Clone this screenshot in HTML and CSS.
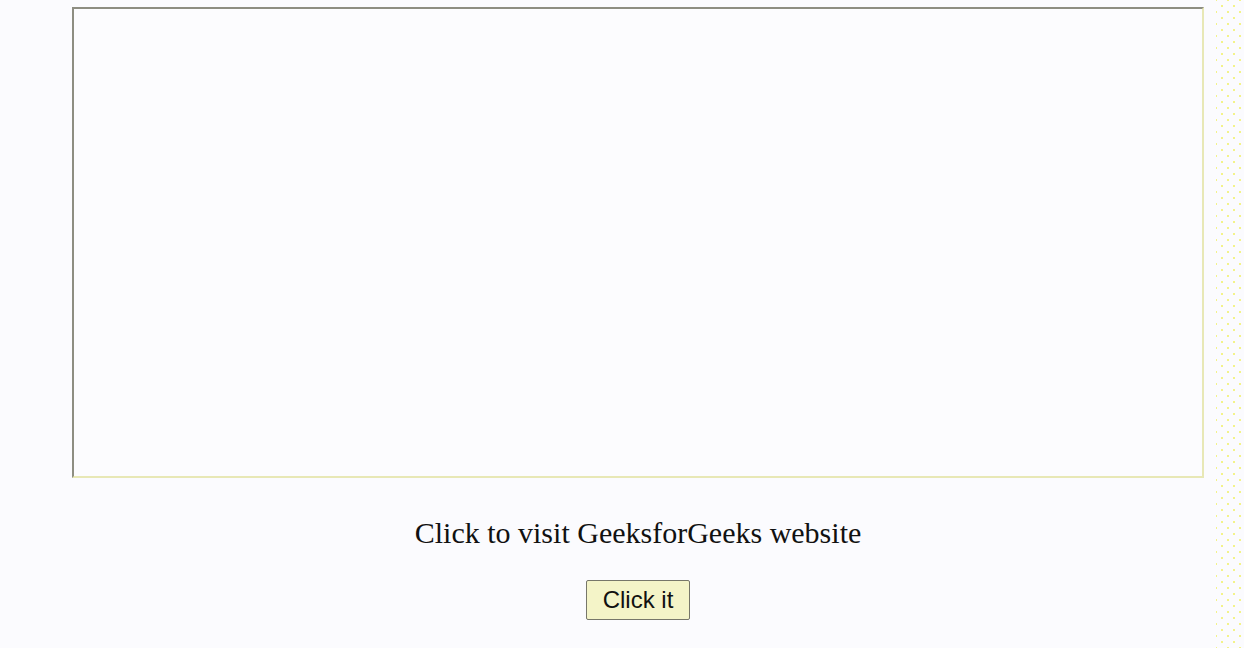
FILE: index.html
```html
<!DOCTYPE html>
<html>
<head>
<meta charset="utf-8">
<link rel="stylesheet" href="styles.css">
</head>
<body>
<div class="page">
  <div class="frame"></div>
  <p class="caption">Click to visit GeeksforGeeks website</p>
  <button class="btn">Click it</button>
</div>
<div class="dots"></div>
</body>
</html>
```
FILE: styles.css
```css
html, body {
  margin: 0;
  background: #fbfbfe;
}
body {
  padding: 7px 0 0 0;
  font-family: "Liberation Serif", "Times New Roman", serif;
  position: relative;
  height: 641px;
  overflow: hidden;
}
.page {
  display: flex;
  flex-direction: column;
  align-items: center;
  width: 1276px;
}
.frame {
  width: 1128px;
  height: 467px;
  border-style: solid;
  border-width: 2px;
  border-color: #8e8e82 #e8e8b6 #e8e8b6 #8e8e82;
  background: #fcfcfe;
}
.caption {
  margin: 37px 0 0 0;
  font-size: 30px;
  line-height: 36px;
  color: #111;
}
.btn {
  margin-top: 29px;
  width: 104px;
  height: 40px;
  padding: 0;
  font-family: "Liberation Sans", Arial, sans-serif;
  font-size: 24px;
  color: #111;
  background: #f4f4c8;
  border: 1px solid #77776a;
  border-radius: 2px;
}
.dots {
  position: absolute;
  top: 0;
  right: 0;
  width: 28px;
  height: 648px;
  background-image:
    radial-gradient(circle, #f3f38a 0.9px, transparent 1.2px),
    radial-gradient(circle, #f3f38a 0.9px, transparent 1.2px);
  background-size: 12px 12px;
  background-position: 0 0, 6px 6px;
}
```
